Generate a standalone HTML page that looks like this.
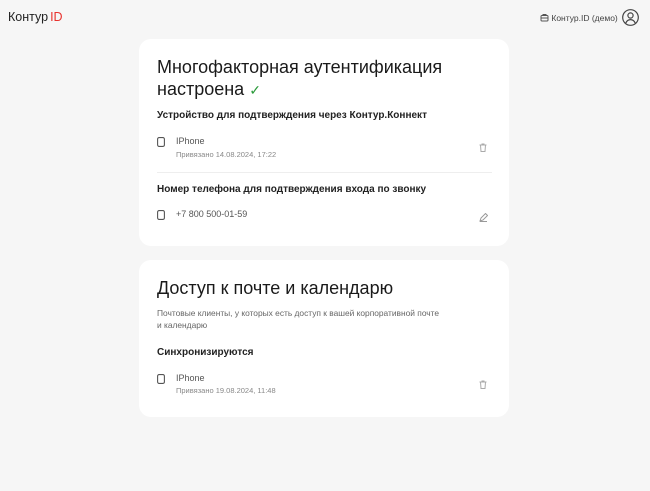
<!DOCTYPE html>
<html><head><meta charset="utf-8"><style>
body{margin:0;width:650px;height:491px;background:#f6f6f6;font-family:"Liberation Sans",sans-serif;color:#222;position:relative;overflow:hidden}
.a{position:absolute;white-space:nowrap}
.card{position:absolute;left:139px;width:370px;background:#fff;border-radius:12px}
.h1{font-size:18px;line-height:22px;color:#1a1a1a}
.h2{font-size:10px;font-weight:bold;color:#222}
.t{font-size:9px;color:#555}
.s{font-size:7.5px;color:#888}
</style></head><body>
<div class="a" style="left:8px;top:10px;font-size:12.5px;color:#222">Контур<span style="color:#e8322e;margin-left:2px">ID</span></div>
<div class="a" style="left:540px;top:13px;font-size:8.5px;color:#444"><svg width="9" height="9" viewBox="0 0 9 9" style="vertical-align:-1px"><rect x="1" y="2.5" width="7" height="5.5" rx="1" fill="none" stroke="#555"/><path d="M3 2.5V1.5h3v1M1 5h7" stroke="#555" fill="none"/></svg> Контур.ID (демо)</div>
<svg class="a" style="left:622px;top:9px" width="17" height="17" viewBox="0 0 17 17"><circle cx="8.5" cy="8.5" r="7.8" fill="none" stroke="#444" stroke-width="1.2"/><circle cx="8.5" cy="6.5" r="2.6" fill="none" stroke="#444" stroke-width="1.2"/><path d="M3.8 14c1-2.4 2.8-3.4 4.7-3.4s3.7 1 4.7 3.4" fill="none" stroke="#444" stroke-width="1.2"/></svg>

<div class="card" style="top:39px;height:207px">
<div class="a h1" style="left:18px;top:17px">Многофакторная аутентификация<br>настроена <span style="color:#2a9a3a;font-size:14px">✓</span></div>
<div class="a h2" style="left:18px;top:71px">Устройство для подтверждения через Контур.Коннект</div>
<svg class="a" style="left:18px;top:98px" width="8" height="10"><rect x=".6" y=".6" width="6.8" height="8.8" rx="1.5" fill="none" stroke="#555" stroke-width="1.1"/></svg>
<div class="a t" style="left:37px;top:97px">IPhone</div>
<div class="a s" style="left:37px;top:111px">Привязано 14.08.2024, 17:22</div>
<svg class="a" style="left:340px;top:104px" width="8" height="9"><path d="M.5 2h7M3 2V1h2v1M1.5 2l.5 6.5h4L6.5 2" fill="none" stroke="#aaa"/></svg>
<div class="a" style="left:18px;top:133px;width:335px;height:1px;background:#eee"></div>
<div class="a h2" style="left:18px;top:145px">Номер телефона для подтверждения входа по звонку</div>
<svg class="a" style="left:18px;top:171px" width="8" height="10"><rect x=".6" y=".6" width="6.8" height="8.8" rx="1.5" fill="none" stroke="#555" stroke-width="1.1"/></svg>
<div class="a t" style="left:37px;top:170px">+7 800 500-01-59</div>
<svg class="a" style="left:340px;top:174px" width="9" height="9"><path d="M1 8l1-3 4.5-4.5 2 2L4 7zM1 8.5h7" fill="none" stroke="#999"/></svg>
</div>

<div class="card" style="top:260px;height:157px">
<div class="a h1" style="left:18px;top:17px">Доступ к почте и календарю</div>
<div class="a s" style="left:18px;top:47px;font-size:8.4px;color:#666;line-height:12px">Почтовые клиенты, у которых есть доступ к вашей корпоративной почте<br>и календарю</div>
<div class="a h2" style="left:18px;top:87px">Синхронизируются</div>
<svg class="a" style="left:18px;top:114px" width="8" height="10"><rect x=".6" y=".6" width="6.8" height="8.8" rx="1.5" fill="none" stroke="#555" stroke-width="1.1"/></svg>
<div class="a t" style="left:37px;top:113px">IPhone</div>
<div class="a s" style="left:37px;top:126px">Привязано 19.08.2024, 11:48</div>
<svg class="a" style="left:340px;top:120px" width="8" height="9"><path d="M.5 2h7M3 2V1h2v1M1.5 2l.5 6.5h4L6.5 2" fill="none" stroke="#aaa"/></svg>
</div>
</body></html>
